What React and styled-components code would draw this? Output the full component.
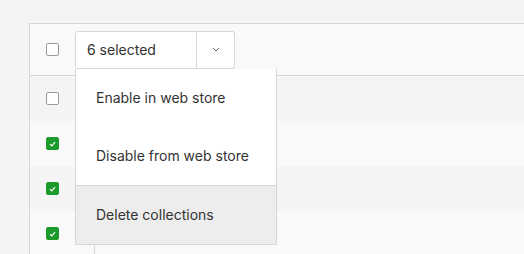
import React, { useState } from 'react'
import styled, { createGlobalStyle } from 'styled-components'

const GlobalStyle = createGlobalStyle`
body {
  margin: 0;
  background: #f4f4f4;
  font-family: Inter, 'Liberation Sans', sans-serif;
  overflow: hidden;
}
`

const Page = styled.div`
padding: 23px 0 0 29px;
height: 254px;
box-sizing: border-box;
overflow: hidden;
`

const Table = styled.div`
background: #f9f9f9;
border: 1px solid #d6d6d6;
border-right: none;
`

const HeaderRow = styled.div`
height: 51px;
display: flex;
align-items: center;
padding-left: 16px;
gap: 16px;
border-bottom: 1px solid #d6d6d6;
`

const Row = styled.div`
height: 45px;
display: flex;
background: ${props => props.striped ? '#f4f4f4' : '#f9f9f9'};
`

const CheckCell = styled.div`
width: 65px;
border-right: 1px solid #d6d6d6;
display: flex;
align-items: center;
padding-left: 16px;
box-sizing: border-box;
`

const Box = styled.span`
width: 13px;
height: 13px;
box-sizing: border-box;
border-radius: 2px;
display: inline-flex;
align-items: center;
justify-content: center;
background: ${props => props.checked ? '#1a9b2b' : '#fff'};
border: 1px solid ${props => props.checked ? '#1a9b2b' : '#9a9a9a'};
`

const Bulk = styled.div`
position: relative;
display: flex;
height: 38px;
`

const BulkLabel = styled.div`
width: 122px;
border: 1px solid #d6d6d6;
border-radius: 3px 0 0 3px;
background: #fff;
box-sizing: border-box;
display: flex;
align-items: center;
padding-left: 11px;
font-size: 14px;
color: #333;
`

const BulkToggle = styled.button`
width: 38px;
border: 1px solid #d6d6d6;
border-left: none;
border-radius: 0 3px 3px 0;
background: #fff;
display: flex;
align-items: center;
justify-content: center;
padding: 0;
`

const Menu = styled.div`
position: absolute;
top: 38px;
left: 0;
width: 200px;
background: #fff;
border: 1px solid #d6d6d6;
border-top: none;
z-index: 2;
`

const MenuItem = styled.div`
height: 58px;
display: flex;
align-items: center;
padding-left: 20px;
font-size: 14px;
color: #333;
background: ${props => props.active ? '#ededed' : '#fff'};
border-top: ${props => props.divided ? '1px solid #d6d6d6' : 'none'};
`

const Check = () => (
    <svg width="7" height="6" viewBox="0 0 7 6">
        <path d="M1 3.2 L2.8 4.8 L6 1.2" fill="none" stroke="#fff" strokeWidth="1.2" />
    </svg>
)

const Chevron = () => (
    <svg width="8" height="5" viewBox="0 0 8 5">
        <path d="M1 1 L4 4 L7 1" fill="none" stroke="#555" strokeWidth="1" />
    </svg>
)

const App = () => {
    const [open] = useState(true)
    const rows = [false, true, true, true]

    return (
        <Page>
            <GlobalStyle />
            <Table>
                <HeaderRow>
                    <Box />
                    <Bulk>
                        <BulkLabel>6 selected</BulkLabel>
                        <BulkToggle><Chevron /></BulkToggle>
                        {open ? (
                            <Menu>
                                <MenuItem>Enable in web store</MenuItem>
                                <MenuItem>Disable from web store</MenuItem>
                                <MenuItem active divided>Delete collections</MenuItem>
                            </Menu>
                        ) : null}
                    </Bulk>
                </HeaderRow>
                {rows.map((checked, i) => (
                    <Row key={i} striped={i % 2 === 0}>
                        <CheckCell>
                            <Box checked={checked}>{checked ? <Check /> : null}</Box>
                        </CheckCell>
                    </Row>
                ))}
            </Table>
        </Page>
    )
}

export default App
